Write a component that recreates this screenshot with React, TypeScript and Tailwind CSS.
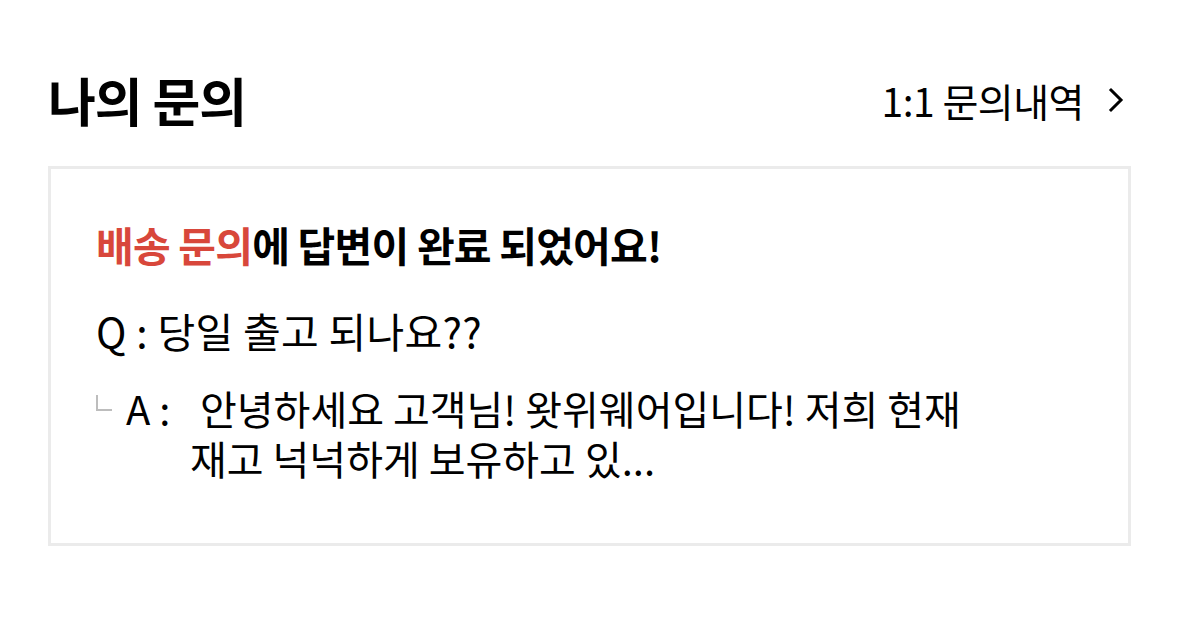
export default function App() {
  return (
    <div
      className="h-[626px] w-[1179px] bg-white px-12 pt-[68px] text-black"
      style={{ fontFamily: '"Noto Sans CJK KR", "Noto Sans", sans-serif' }}
    >
      <div className="flex h-[64px] items-center justify-between">
        <h1 className="text-[52px] font-bold leading-none tracking-[-1px]">나의 문의</h1>
        <div className="flex items-center gap-[24px] pr-[7px]">
          <span className="text-[39px] leading-none tracking-[-0.5px]">1:1 문의내역</span>
          <svg
            className="h-[26px] w-[16px]"
            viewBox="0 0 16 26"
            fill="none"
            stroke="currentColor"
            strokeWidth={3}
            strokeLinecap="square"
          >
            <path d="M3 3l10 10-10 10" />
          </svg>
        </div>
      </div>

      <div className="mt-[34px] h-[380px] border-[3px] border-[#ebebeb] px-[45px] pt-[50px]">
        <p className="text-[41px] font-bold leading-[50px] tracking-[-0.8px]">
          <span className="text-[#d8473b]">배송 문의</span>에 답변이 완료 되었어요!
        </p>
        <p className="mt-[36px] text-[41px] leading-[50px] tracking-[0.3px]">Q : 당일 출고 되나요??</p>
        <div className="mt-[28px] flex text-[40px] leading-[50px]">
          <div className="flex items-start pt-[12px]">
            <span className="block h-[16px] w-[16px] border-b-[2px] border-l-[2px] border-[#bdbdbd]" />
          </div>
          <span className="ml-[14px] w-[74px] shrink-0">A :</span>
          <div className="w-[920px]">
            <div>안녕하세요 고객님! 왓위웨어입니다! 저희 현재</div>
            <div className="-ml-[10px]">재고 넉넉하게 보유하고 있...</div>
          </div>
        </div>
      </div>
    </div>
  );
}
